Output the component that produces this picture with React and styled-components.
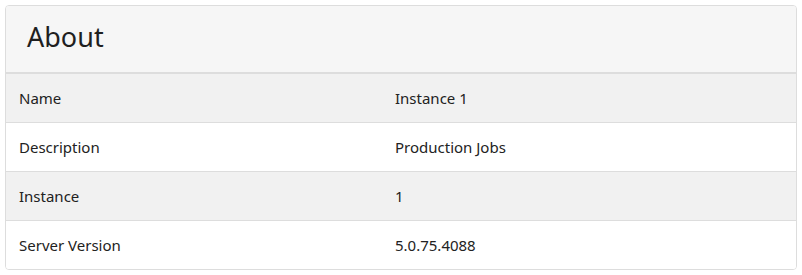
import React from "react";
import styled, { createGlobalStyle } from "styled-components";

const GlobalStyle = createGlobalStyle`
  body {
    margin: 0;
    padding: 5px;
    background: #fff;
    font-family: "Noto Sans", "Open Sans", sans-serif;
    color: #222;
  }
`;

const Panel = styled.div`
  width: 790px;
  border: 1px solid #ddd;
  border-radius: 4px;
  overflow: hidden;
  background: #fff;
`;

const Header = styled.div`
  box-sizing: border-box;
  height: 68px;
  display: flex;
  align-items: center;
  padding: 0 21px 5px;
  background: #f6f6f6;
  border-bottom: 2px solid #ddd;
`;

const Title = styled.h2`
  margin: 0;
  font-size: 27px;
  font-weight: 400;
  color: #1f1f1f;
`;

const Row = styled.div`
  display: grid;
  grid-template-columns: 376px 1fr;
  height: 48px;
  align-items: center;
  background: ${(p) => (p.$striped ? "#f1f1f1" : "#fff")};
  border-top: ${(p) => (p.$first ? "none" : "1px solid #ddd")};
`;

const Cell = styled.div`
  padding: 0 13px;
  font-size: 15px;
  color: #222;
`;

const rows = [
  ["Name", "Instance 1"],
  ["Description", "Production Jobs"],
  ["Instance", "1"],
  ["Server Version", "5.0.75.4088"],
];

const App = () => (
  <>
    <GlobalStyle />
    <Panel>
      <Header>
        <Title>About</Title>
      </Header>
      {rows.map(([label, value], i) => (
        <Row key={label} $striped={i % 2 === 0} $first={i === 0}>
          <Cell>{label}</Cell>
          <Cell>{value}</Cell>
        </Row>
      ))}
    </Panel>
  </>
);

export default App;
